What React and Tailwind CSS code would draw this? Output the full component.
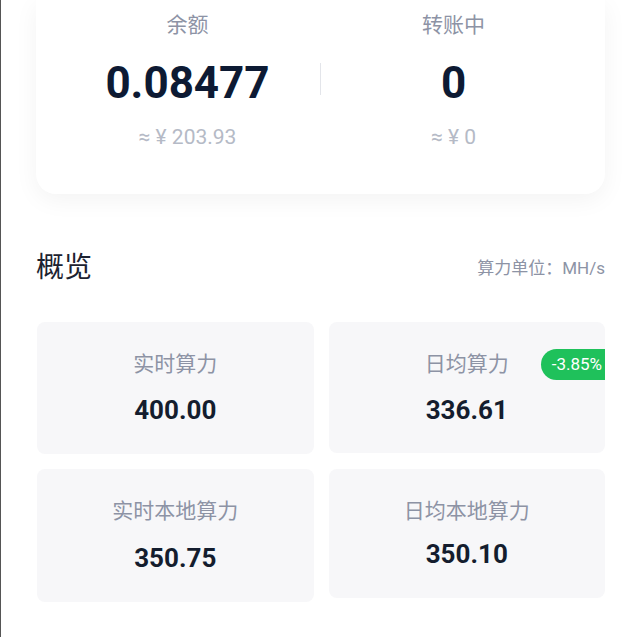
import React from "react";

const font = "font-['Roboto','Noto_Sans_CJK_SC',sans-serif]";

function Stat({ label, value, sub }) {
  return (
    <div className="flex flex-1 flex-col items-center">
      <div className="text-[21px] leading-[24px] text-[#8d93a5]">{label}</div>
      <div className="mt-[20px] text-[44px] font-bold leading-[52px] text-[#0d1a33]">{value}</div>
      <div className="mt-[16px] text-[21px] leading-[24px] text-[#b5bac6]">{sub}</div>
    </div>
  );
}

function Card({ label, value, h, gap, badge }) {
  return (
    <div className={`relative flex flex-col items-center rounded-[8px] bg-[#f7f7f9] pt-[30px] ${h}`}>
      <div className="text-[21px] leading-[24px] text-[#8d93a5]">{label}</div>
      <div className={`${gap} text-[26px] font-bold leading-[30px] text-[#141d2e]`}>{value}</div>
      {badge && (
        <div className="absolute right-0 top-[27px] flex h-[31px] items-center rounded-l-full bg-[#1fc15b] pl-[11px] pr-[3px] text-[17px] text-white">
          {badge}
        </div>
      )}
    </div>
  );
}

export default function App() {
  return (
    <div className={`${font} min-h-[637px] w-[640px] border-l border-[#555] bg-white`}>
      <div className="pl-[35px] pr-[35px]">
        <div className="flex items-start rounded-b-[20px] bg-white px-[19px] pt-[13px] pb-[45px] shadow-[0_6px_24px_rgba(0,0,0,0.05)]">
          <Stat label="余额" value="0.08477" sub="≈ ¥ 203.93" />
          <div className="mt-[50px] h-[32px] w-px bg-[#e3e5ea]" />
          <Stat label="转账中" value="0" sub="≈ ¥ 0" />
        </div>

        <div className="mt-[57px] flex items-center justify-between">
          <div className="text-[28px] leading-[34px] text-[#1c2230]">概览</div>
          <div className="text-[17px] leading-[20px] text-[#8d93a5]">算力单位：MH/s</div>
        </div>

        <div className="mt-[37px] grid grid-cols-2 items-start gap-x-[15px] gap-y-[15px] pl-px">
          <Card label="实时算力" value="400.00" h="h-[132px]" gap="mt-[19px]" />
          <Card label="日均算力" value="336.61" h="h-[131px]" gap="mt-[19px]" badge="-3.85%" />
          <Card label="实时本地算力" value="350.75" h="h-[133px]" gap="mt-[20px]" />
          <Card label="日均本地算力" value="350.10" h="h-[129px]" gap="mt-[16px]" />
        </div>
      </div>
    </div>
  );
}
